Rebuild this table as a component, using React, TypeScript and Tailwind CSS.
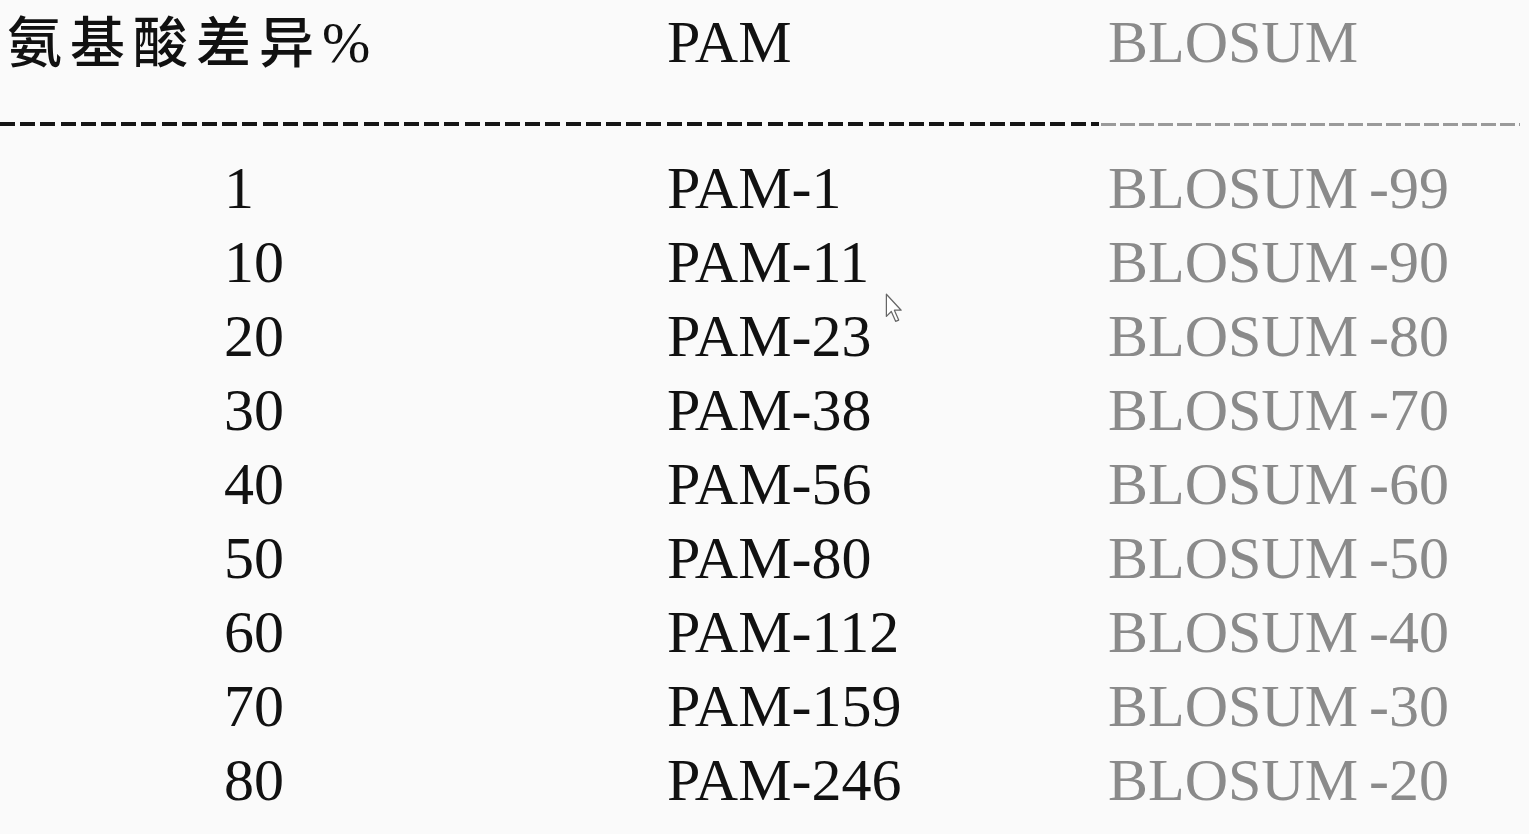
import React from "react";

const rows: [string, string, string][] = [
  ["1", "PAM-1", "BLOSUM -99"],
  ["10", "PAM-11", "BLOSUM -90"],
  ["20", "PAM-23", "BLOSUM -80"],
  ["30", "PAM-38", "BLOSUM -70"],
  ["40", "PAM-56", "BLOSUM -60"],
  ["50", "PAM-80", "BLOSUM -50"],
  ["60", "PAM-112", "BLOSUM -40"],
  ["70", "PAM-159", "BLOSUM -30"],
  ["80", "PAM-246", "BLOSUM -20"],
];

export default function App() {
  return (
    <div
      className="relative w-[1529px] h-[834px] overflow-hidden bg-[#fafafa] text-[#111]"
      style={{ fontFamily: '"Liberation Serif", "Noto Sans CJK SC", serif' }}
    >
      <div className="pt-[5px]">
        <div className="grid grid-cols-[667px_441px_1fr] items-baseline text-[60px] leading-[74px]">
          <div className="pl-[7px] text-[55px] tracking-[8px] font-medium">
            氨基酸差异<span className="text-[58px] tracking-normal font-normal">%</span>
          </div>
          <div>PAM</div>
          <div className="text-[#8a8a8a]">BLOSUM</div>
        </div>
        <div className="mt-[41px] flex h-[4px]">
          <div className="w-[1099px] h-[4px] bg-[repeating-linear-gradient(90deg,#151515_0_15px,transparent_15px_20.2px)]" />
          <div className="w-[421px] h-[3px] mt-[1px] bg-[repeating-linear-gradient(90deg,transparent_0_2px,#9a9a9a_2px_17px,transparent_17px_19px)]" />
        </div>
        <div className="mt-[25px]">
          {rows.map(([a, b, c]) => (
            <div
              key={a}
              className="grid grid-cols-[667px_441px_1fr] text-[60px] leading-[74px]"
            >
              <div className="pl-[224px]">{a}</div>
              <div>{b}</div>
              <div className="text-[#8a8a8a]">
                BLOSUM<span className="ml-[-4px]">{c.slice(6)}</span>
              </div>
            </div>
          ))}
        </div>
      </div>
      <svg
        className="absolute left-[884px] top-[293px]"
        width="22"
        height="32"
        viewBox="0 0 16 26"
      >
        <path
          d="M1 1 L1 19 L5 15 L8.5 23 L11 22 L7.5 14 L13 14 Z"
          fill="#ffffff"
          stroke="#666"
          strokeWidth="1"
          strokeLinejoin="round"
        />
      </svg>
    </div>
  );
}
